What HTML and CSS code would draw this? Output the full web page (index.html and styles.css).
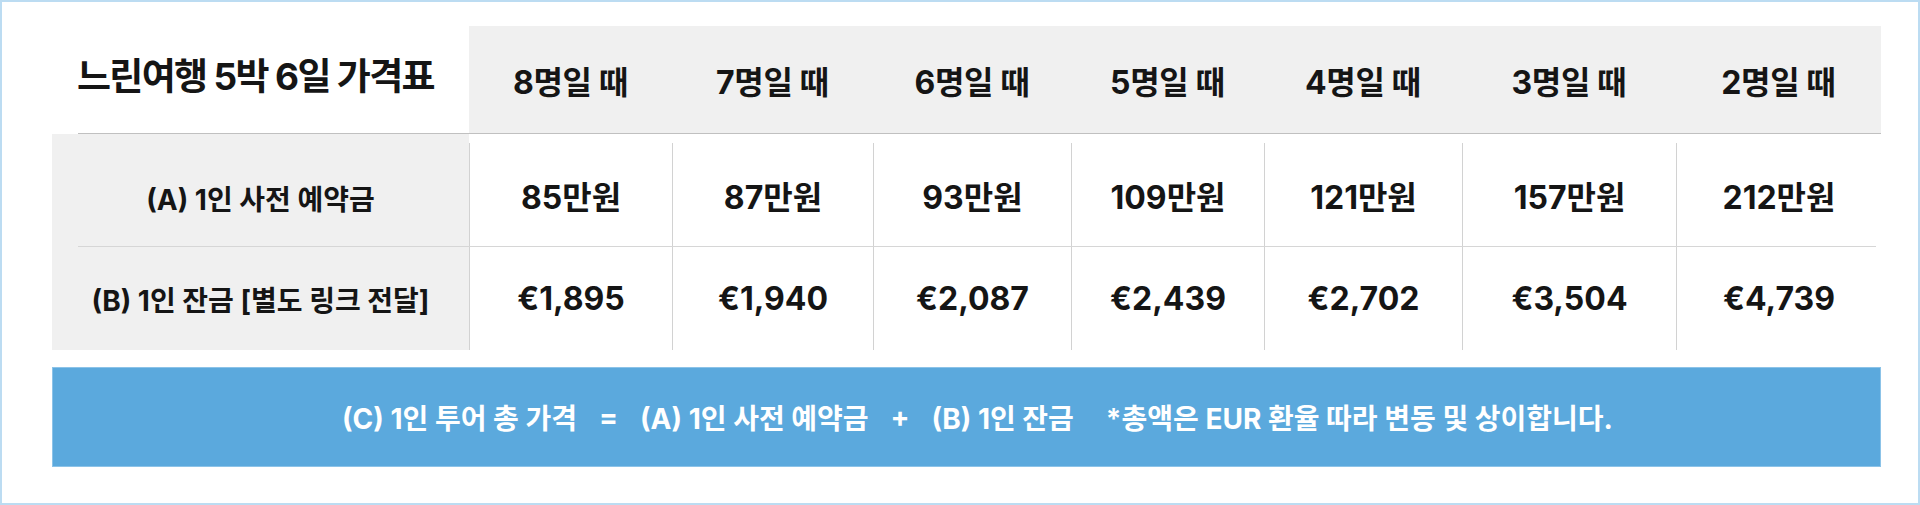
FILE: index.html
```html
<!DOCTYPE html>
<html lang="ko">
<head>
<meta charset="utf-8">
<title>느린여행 5박 6일 가격표</title>
<link rel="stylesheet" href="styles.css">
</head>
<body>
<div class="page">
  <div class="price-table">
    <div class="row head">
      <div class="title">느린여행 5박 6일 가격표</div>
      <div class="hcell">8명일 때</div>
      <div class="hcell">7명일 때</div>
      <div class="hcell">6명일 때</div>
      <div class="hcell">5명일 때</div>
      <div class="hcell">4명일 때</div>
      <div class="hcell">3명일 때</div>
      <div class="hcell">2명일 때</div>
    </div>
    <div class="row row-a">
      <div class="label">(A) 1인 사전 예약금</div>
      <div class="cell">85만원</div>
      <div class="cell">87만원</div>
      <div class="cell">93만원</div>
      <div class="cell">109만원</div>
      <div class="cell">121만원</div>
      <div class="cell">157만원</div>
      <div class="cell">212만원</div>
    </div>
    <div class="row row-b">
      <div class="label">(B) 1인 잔금 [별도 링크 전달]</div>
      <div class="cell">€1,895</div>
      <div class="cell">€1,940</div>
      <div class="cell">€2,087</div>
      <div class="cell">€2,439</div>
      <div class="cell">€2,702</div>
      <div class="cell">€3,504</div>
      <div class="cell">€4,739</div>
    </div>
  </div>
  <div class="total">
    <span class="seg">(C) 1인 투어 총 가격</span>
    <span class="op">=</span>
    <span class="seg">(A) 1인 사전 예약금</span>
    <span class="op">+</span>
    <span class="seg">(B) 1인 잔금</span>
    <span class="seg note">*총액은 EUR 환율 따라 변동 및 상이합니다.</span>
  </div>
</div>
</body>
</html>
```

FILE: styles.css
```css
html, body {
  margin: 0;
  padding: 0;
  background: #ffffff;
}

body {
  font-family: Inter, "Noto Sans CJK KR", sans-serif;
  color: #151515;
  font-weight: 700;
}

.page {
  width: 1920px;
  height: 505px;
  box-sizing: border-box;
  border: 2px solid #bcdcf2;
  padding: 24px 37px 0 50px;
}

.row {
  display: grid;
  grid-template-columns: 417px 203px 201px 198px 193px 198px 214px 205px;
  position: relative;
}

.head {
  height: 108px;
}

.head::after {
  content: "";
  position: absolute;
  left: 26px;
  right: 0;
  bottom: 0;
  height: 1px;
  background: #c0c0c0;
}

.title {
  display: flex;
  align-items: center;
  justify-content: center;
  padding: 0 10px 12px 0;
  font-size: 37px;
  letter-spacing: -0.045em;
  white-space: nowrap;
}

.hcell {
  background: #f0f0f0;
  display: flex;
  align-items: center;
  justify-content: center;
  font-size: 32px;
  letter-spacing: -0.01em;
  white-space: nowrap;
}

.row-a {
  height: 113px;
}

.row-a::after {
  content: "";
  position: absolute;
  left: 26px;
  right: 5px;
  bottom: 0;
  height: 1px;
  background: #d6d6d6;
}

.row-b {
  height: 103px;
}

.label {
  background: #f0f0f0;
  display: flex;
  align-items: center;
  justify-content: center;
  font-size: 28px;
  white-space: nowrap;
}

.row-a .label {
  padding-top: 14px;
}

.cell {
  border-left: 1px solid #d2d2d2;
  display: flex;
  align-items: center;
  justify-content: center;
  font-size: 32px;
  white-space: nowrap;
}

.row-a .cell {
  margin-top: 9px;
}

.total {
  margin-top: 17px;
  height: 100px;
  box-sizing: border-box;
  border: 1px solid #8cc3e8;
  background: #5ba9dd;
  color: #ffffff;
  display: flex;
  align-items: center;
  justify-content: center;
  gap: 22px;
  padding-left: 22px;
  font-size: 28px;
  white-space: nowrap;
}

.note {
  margin-left: 10px;
}
```
